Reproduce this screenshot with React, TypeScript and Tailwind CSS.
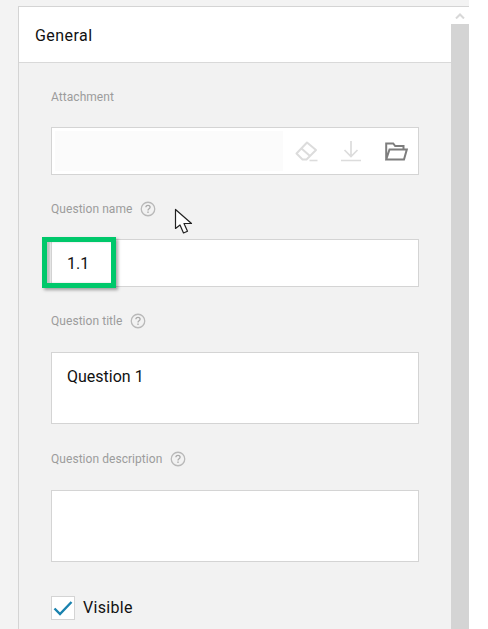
const roboto = { fontFamily: "Roboto, sans-serif" };

function Help() {
  return (
    <svg width="16" height="16" viewBox="0 0 16 16" fill="none" className="shrink-0">
      <circle cx="8" cy="8" r="6.75" stroke="#b9b9b9" strokeWidth="1.3" />
      <path d="M5.900 6.300c0-1.200 1-2 2.100-2s2.100.8 2.100 1.900c0 1.500-2.100 1.600-2.100 3.200" stroke="#a9a9a9" strokeWidth="1.300" />
      <rect x="7.300" y="10.500" width="1.400" height="1.400" fill="#a9a9a9" />
    </svg>
  );
}

function Label({ text, help, className }: { text: string; help?: boolean; className: string }) {
  return (
    <div className={`flex h-[20px] items-center gap-[8px] text-[12px] tracking-[0.05px] text-[#9c9c9c] ${className}`}>
      <span>{text}</span>
      {help && <Help />}
    </div>
  );
}

export default function App() {
  return (
    <div className="relative h-[629px] w-[488px] overflow-hidden bg-white" style={roboto}>
      <div className="flex h-[629px] w-[469px] flex-col bg-[#f3f3f3]">
        <div className="h-[6px] shrink-0" />
        <div className="ml-[18px] flex min-h-0 flex-1 border-t border-l border-[#d4d4d4]">
          <div className="flex w-[432px] shrink-0 flex-col">
            <div className="flex h-[56px] shrink-0 items-center border-b border-[#d9d9d9] bg-white pl-[16px] pt-[2px] text-[16px] tracking-[0.45px] text-[#111111]">
              General
            </div>
            <div className="flex flex-1 flex-col bg-[#f2f2f2] pl-[32px] pr-[32px]">
              <Label text="Attachment" className="mt-[24px]" />
              <div className="mt-[20px] flex h-[48px] border border-[#d4d4d4] bg-white p-[3px] pr-0">
                <div className="w-[228px] bg-[#fbfbfb]" />
                <div className="flex flex-1 items-center">
                  <svg width="24" height="24" viewBox="0 0 24 24" fill="none" className="ml-[12px]">
                    <path d="M1.500 14.500 12 3.500 21 11 11.500 20.500H7.500Z M6.500 9.500 15 17" stroke="#dcdcdc" strokeWidth="2" strokeLinejoin="round" />
                    <path d="M14.500 21.500h8" stroke="#dcdcdc" strokeWidth="1.600" />
                  </svg>
                  <svg width="22" height="22" viewBox="0 0 22 22" fill="none" className="ml-[21px]">
                    <path d="M11 1v15M4.500 10l6.500 6.500 6.500-6.500M1 20.500h20" stroke="#dcdcdc" strokeWidth="1.700" />
                  </svg>
                  <svg width="23" height="19" viewBox="0 0 23 19" fill="none" className="ml-[23px]">
                    <path d="M1.200 17.500V1.500h7l2 2.500h8.300v3.500M1.200 17.500 4.500 7.500h17.300l-2.800 10Z" stroke="#7d7d7d" strokeWidth="2" />
                  </svg>
                </div>
              </div>
              <Label text="Question name" help className="mt-[24px]" />
              <div className="mt-[20px] flex h-[48px] items-center border border-[#d4d4d4] bg-white pl-[15px] pt-[1px] text-[16px] text-[#111111]">
                1.1
              </div>
              <Label text="Question title" help className="mt-[24px]" />
              <div className="mt-[21px] h-[72px] border border-[#d4d4d4] bg-white pl-[15px] pt-[12px] text-[16px] text-[#111111]">
                Question 1
              </div>
              <Label text="Question description" help className="mt-[25px]" />
              <div className="mt-[21px] h-[72px] border border-[#d4d4d4] bg-white" />
              <div className="mt-[33px] flex items-center gap-[8px] text-[16px] tracking-[0.3px] text-[#111111]">
                <div className="flex h-[24px] w-[24px] items-center justify-center border border-[#d4d4d4] bg-white">
                  <svg width="20" height="16" viewBox="0 0 20 16" fill="none">
                    <path d="M1.500 8.500 7 14 18.500 2" stroke="#1a82ae" strokeWidth="2.400" />
                  </svg>
                </div>
                <span className="pt-[1px]">Visible</span>
              </div>
            </div>
          </div>
          <div className="flex w-[18px] shrink-0 flex-col bg-[#d4d4d4]">
            <div className="flex h-[17px] items-center justify-center bg-white">
              <svg width="10" height="6" viewBox="0 0 10 6" fill="none">
                <path d="M1 5.500 5 1.500l4 4" stroke="#d8d8d8" strokeWidth="2" />
              </svg>
            </div>
          </div>
        </div>
      </div>
      <div className="absolute left-[42px] top-[237px] h-[51px] w-[74px] border-[5px] border-[#00c86b] shadow-[2px_2px_3px_rgba(0,0,0,0.35),inset_3px_0_2px_rgba(0,0,0,0.2)]" />
      <svg width="20" height="28" viewBox="0 0 20 28" fill="none" className="absolute left-[174px] top-[208px]">
        <path d="M1.500 1.500V20.500L6 17l3.500 8 4-1.800L10 15.500h7.500Z" fill="#fff" stroke="#222" strokeWidth="1.200" strokeLinejoin="round" />
      </svg>
    </div>
  );
}
